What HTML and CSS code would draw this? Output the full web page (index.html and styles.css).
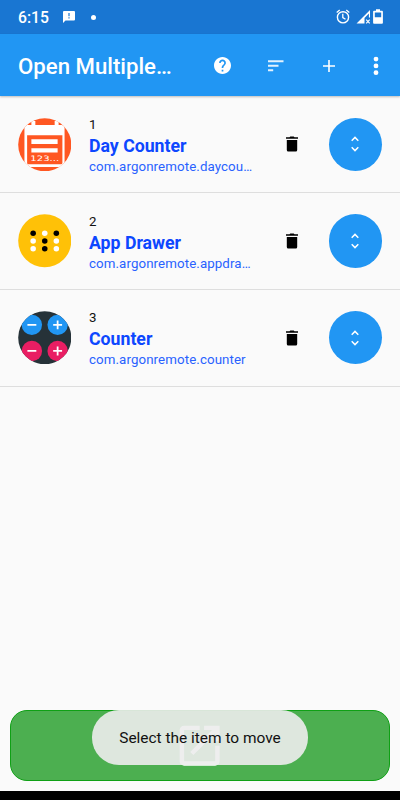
FILE: index.html
```
<!DOCTYPE html>
<html lang="en">
<head>
<meta charset="utf-8">
<title>Open Multiple Apps</title>
<link rel="stylesheet" href="styles.css">
</head>
<body>
<div class="screen">
  <div class="status">
    <span class="time">6:15</span>
    <svg class="notice" viewBox="0 0 12 12"><path fill="#fff" fill-rule="evenodd" d="M1 0h10a1 1 0 0 1 1 1v7.500a1 1 0 0 1-1 1H2.500L0 12V1a1 1 0 0 1 1-1zM5.400 2v3.200h1.200V2zm0 4.200v1.300h1.200V6.200z"/></svg>
    <span class="dot"></span>
    <svg class="tray" viewBox="0 0 50 18">
      <g fill="none" stroke="#fff"><circle cx="8" cy="9.300" r="5.600" stroke-width="1.400"/><path stroke-width="1.300" d="M7.800 5.800v3.800l2.700 1.700M1.700 4.400l3-2.500M14.300 4.400l-3-2.500"/></g>
      <path fill="#fff" d="M21.500 15.500 35 2v7.600h-1.100V5.600l-4.400 4.500v5.400z"/>
      <path stroke="#fff" stroke-width="1.200" d="m31.200 11.600 3.500 3.700m0-3.700-3.500 3.700"/>
      <path fill="#fff" fill-rule="evenodd" d="M41 1.300h4v1.500h2a.9.9 0 0 1 .9.9v11.100a.9.9 0 0 1-.9.9h-8a.9.9 0 0 1-.9-.9V3.700a.9.9 0 0 1 .9-.9h2zM39.800 4.500v4.700h6.400V4.500z"/>
    </svg>
  </div>
  <header class="bar">
    <h1>Open Multiple…</h1>
    <svg class="help" viewBox="2 2 20 20"><path fill="#fff" d="M12 2C6.480 2 2 6.480 2 12s4.480 10 10 10 10-4.480 10-10S17.520 2 12 2zm1 17h-2v-2h2v2zm2.070-7.750-.9.920C13.450 12.900 13 13.500 13 15h-2v-.5c0-1.100.45-2.100 1.170-2.830l1.240-1.260c.37-.36.59-.86.59-1.410 0-1.100-.9-2-2-2s-2 .9-2 2H8c0-2.210 1.790-4 4-4s4 1.790 4 4c0 .88-.36 1.680-.93 2.250z"/></svg>
    <svg class="sort" viewBox="0 0 16 12"><path fill="#e3f2fd" d="M0 .3h15.500v2H0zm0 4.500h10.500v2H0zm0 4.500h5.200v2H0z"/></svg>
    <svg class="plus" viewBox="0 0 12 12"><path stroke="#fff" stroke-width="1.600" d="M6 0v12M0 6h12"/></svg>
    <svg class="more" viewBox="0 0 6 20"><g fill="#fff"><circle cx="3" cy="3.100" r="2.400"/><circle cx="3" cy="9.900" r="2.400"/><circle cx="3" cy="16.700" r="2.400"/></g></svg>
  </header>
  <main class="list">
    <div class="row">
      <svg class="app" viewBox="0 0 54 54">
        <clipPath id="round"><circle cx="27" cy="27" r="26.800"/></clipPath>
        <g clip-path="url(#round)">
          <path fill="#ff5722" d="M0 0h54v54H0z"/>
          <path fill="#fff" d="M6.500 10q0-3 3-3h4V3h4v4H37V3h4v4h3q3 0 3 3v39.500H6.500z"/>
          <path fill="#ff5722" d="M9.200 17.500h35.600v27.800q0 1.500-1.500 1.500H10.700q-1.500 0-1.500-1.500z"/>
          <path fill="#fff" d="M13.500 21.500H40v4.700H13.500zm0 9H40v4.200H13.500z"/>
          <text class="digits" x="12.500" y="43.200" textLength="29" lengthAdjust="spacingAndGlyphs">123...</text>
        </g>
      </svg>
      <div class="info"><span class="num">1</span><strong>Day Counter</strong><span class="pkg">com.argonremote.daycou…</span></div>
      <svg class="trash" viewBox="0 0 12 16"><path d="M.8 4h10.400v10a1.500 1.500 0 0 1-1.500 1.500H2.300A1.500 1.500 0 0 1 .8 14zM0 1.300h3.500L4.300.5h3.400l.8.8H12v1.500H0z"/></svg>
      <div class="move"><svg viewBox="0 0 8 16"><path d="M.7 4.700 4 1.400l3.300 3.300M.7 11.300 4 14.600l3.300-3.300"/></svg></div>
    </div>
    <div class="row">
      <svg class="app" viewBox="0 0 54 54">
        <circle cx="27" cy="27" r="26.800" fill="#ffc107"/>
        <g fill="#fff"><circle cx="27" cy="19.500" r="2.800"/><circle cx="15.300" cy="27.300" r="2.800"/><circle cx="38.700" cy="27.300" r="2.800"/><circle cx="15.300" cy="35" r="2.800"/><circle cx="38.700" cy="35" r="2.800"/></g>
        <g><circle cx="15.300" cy="19.500" r="2.800"/><circle cx="38.700" cy="19.500" r="2.800"/><circle cx="27" cy="27.300" r="2.800"/><circle cx="27" cy="35" r="2.800"/></g>
      </svg>
      <div class="info"><span class="num">2</span><strong>App Drawer</strong><span class="pkg">com.argonremote.appdra…</span></div>
      <svg class="trash" viewBox="0 0 12 16"><path d="M.8 4h10.400v10a1.500 1.500 0 0 1-1.500 1.500H2.300A1.500 1.500 0 0 1 .8 14zM0 1.300h3.500L4.300.5h3.400l.8.8H12v1.500H0z"/></svg>
      <div class="move"><svg viewBox="0 0 8 16"><path d="M.7 4.700 4 1.400l3.300 3.300M.7 11.300 4 14.600l3.300-3.300"/></svg></div>
    </div>
    <div class="row">
      <svg class="app" viewBox="0 0 54 54">
        <g clip-path="url(#round)">
          <path fill="#263238" d="M0 0h54v54H0z"/>
          <g fill="#2196f3"><circle cx="14" cy="14" r="10.300"/><circle cx="40" cy="14" r="10.300"/></g>
          <g fill="#e91e63"><circle cx="14" cy="40.300" r="10.300"/><circle cx="40" cy="40.300" r="10.300"/></g>
          <path stroke="#fff" stroke-width="1.800" d="M9.500 14h9m17 0h9M40 9.500v9M9.500 40.300h9m17 0h9M40 35.800v9"/>
        </g>
      </svg>
      <div class="info"><span class="num">3</span><strong>Counter</strong><span class="pkg">com.argonremote.counter</span></div>
      <svg class="trash" viewBox="0 0 12 16"><path d="M.8 4h10.400v10a1.500 1.500 0 0 1-1.500 1.500H2.300A1.500 1.500 0 0 1 .8 14zM0 1.300h3.500L4.300.5h3.400l.8.8H12v1.500H0z"/></svg>
      <div class="move"><svg viewBox="0 0 8 16"><path d="M.7 4.700 4 1.400l3.300 3.300M.7 11.300 4 14.600l3.300-3.300"/></svg></div>
    </div>
  </main>
  <div class="launch">
    <svg viewBox="0 0 24 24"><path fill="#fff" d="M19 19H5V5h7V3H5c-1.110 0-2 .9-2 2v14c0 1.100.89 2 2 2h14c1.100 0 2-.9 2-2v-7h-2v7zM14 3v2h3.590l-9.830 9.830 1.410 1.410L19 6.410V10h2V3h-7z"/></svg>
    <div class="toast">Select the item to move</div>
  </div>
  <div class="nav"></div>
</div>
</body>
</html>
```
FILE: styles.css
```
* { box-sizing: border-box; }
body { margin: 0; font-family: Roboto, sans-serif; background: #fafafa; }
svg { display: block; flex: none; }
.screen { width: 400px; height: 800px; display: flex; flex-direction: column; overflow: hidden; }
.status { height: 34px; flex: none; background: #1976d2; color: #fff; display: flex; align-items: center; padding: 0 15.500px 0 18px; }
.time { width: 45px; font-size: 15.700px; font-weight: 500; line-height: 35px; padding-top: 1px; }
.notice { width: 12px; height: 12px; }
.dot { width: 5px; height: 5px; border-radius: 50%; background: #fff; margin-left: 15.500px; }
.tray { width: 50px; height: 18px; margin-left: auto; }
.bar { height: 62px; flex: none; background: #2196f3; color: #fff; display: flex; align-items: center; padding: 1px 21.500px 0 18px; box-shadow: 0 1px 2px rgba(0, 0, 0, .25); }
h1 { margin: 0; padding-top: 1px; width: 196px; font-size: 22.200px; font-weight: 500; line-height: 30px; white-space: nowrap; }
.help { width: 17px; height: 17px; }
.sort { width: 16px; height: 12px; margin-left: 36.500px; }
.plus { width: 12px; height: 12px; margin-left: 39.500px; }
.more { width: 6px; height: 20px; margin-left: auto; }
.list { flex: 1; padding-top: .5px; }
.row { height: 96.700px; border-bottom: 1px solid #dedede; display: flex; align-items: center; padding: 0 18px 0 17.500px; }
.app { width: 53.500px; height: 53.500px; }
.digits { font: 7.500px "DejaVu Sans", sans-serif; fill: #fff; }
.info { width: 197px; padding: 3px 0 0 18px; display: flex; flex-direction: column; white-space: nowrap; }
.num { font-size: 13.300px; line-height: 18px; color: #111; }
.info strong { font-size: 17.700px; font-weight: 700; line-height: 24px; color: #0d47ff; }
.pkg { font-size: 13.300px; line-height: 18px; color: #2962ff; letter-spacing: .1px; }
.trash { width: 12px; height: 16px; margin-left: 18px; }
.move { width: 53.500px; height: 53.500px; margin-left: auto; border-radius: 50%; background: #2196f3; display: flex; align-items: center; justify-content: center; }
.move svg { width: 8px; height: 16px; fill: none; stroke: #fff; stroke-width: 1.500; }
.launch { position: relative; flex: none; height: 71px; margin: 0 10px 10px; border: 1px solid #0fa015; border-radius: 17px; background: #4caf50; display: flex; align-items: center; justify-content: center; }
.launch svg { width: 53.300px; height: 53.300px; }
.toast { position: absolute; top: -1px; left: 81px; width: 216px; height: 55px; border-radius: 27px; background: rgba(236, 236, 236, .91); color: #111; font-size: 15.450px; line-height: 56px; text-align: center; white-space: nowrap; }
.nav { height: 9px; flex: none; background: #000; }
```
